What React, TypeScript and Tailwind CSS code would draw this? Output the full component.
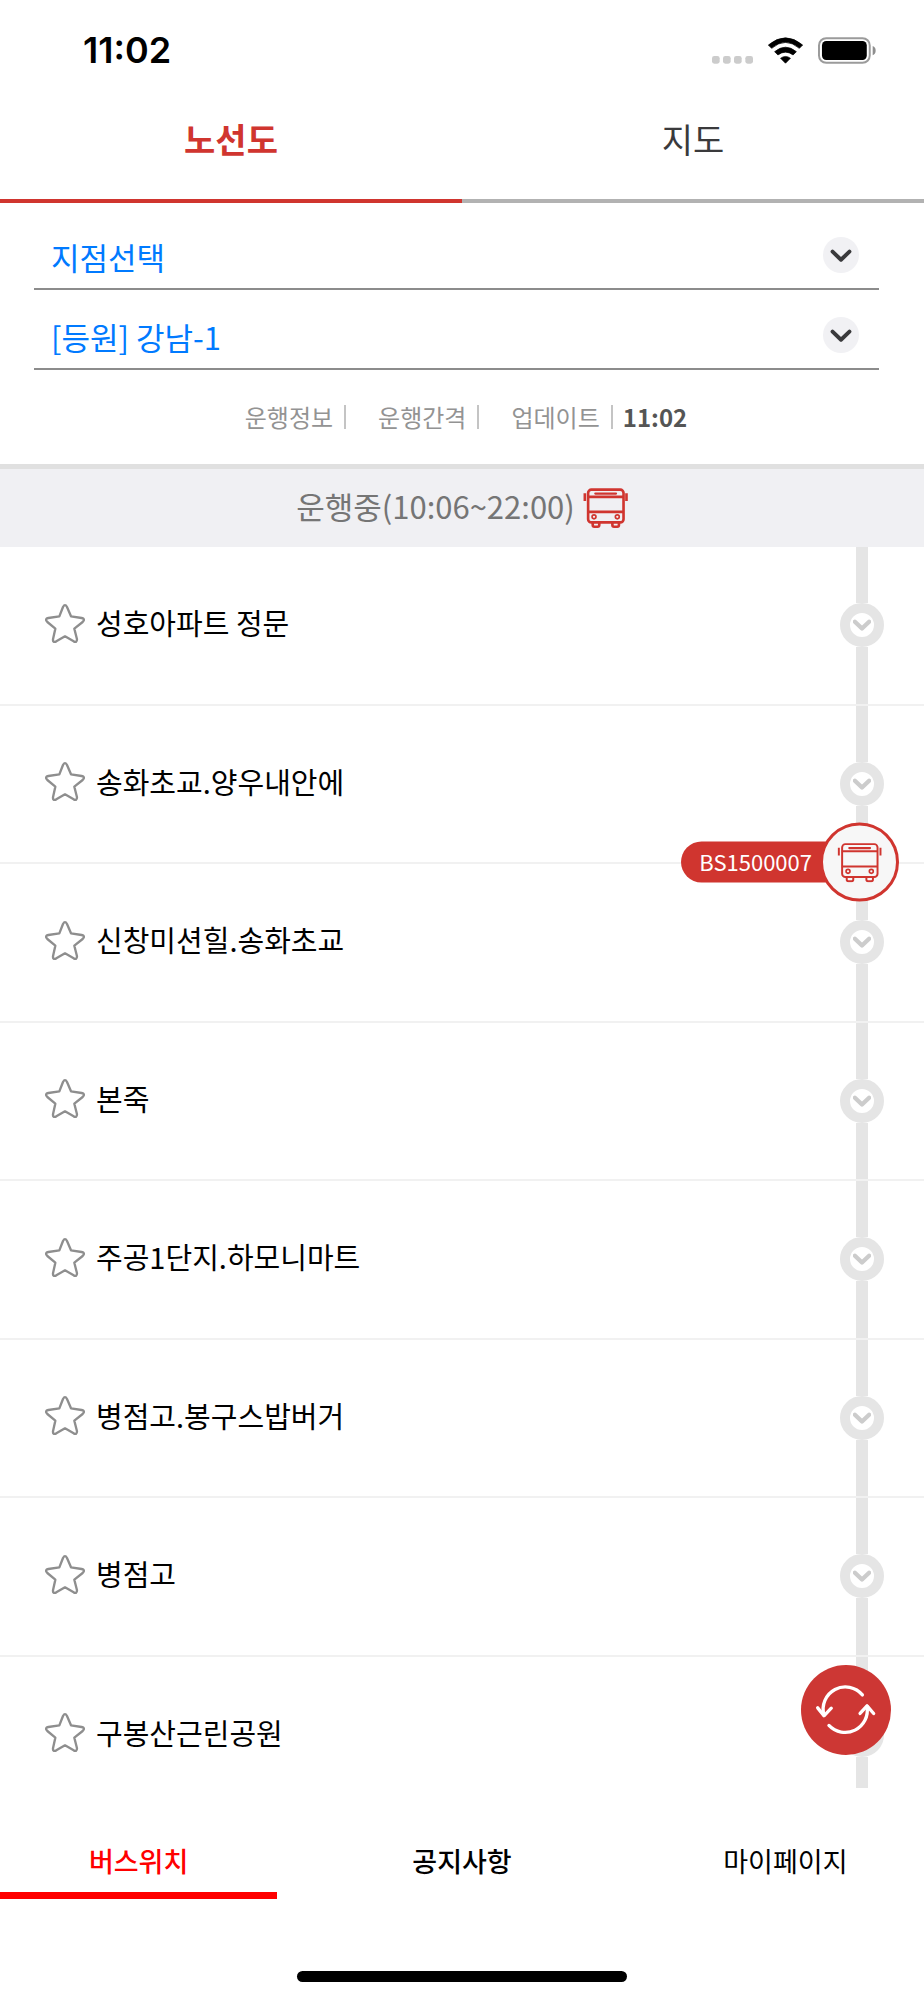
import React, { useState } from 'react'
import clsx from 'clsx'

const stops = [
  { id: 1, name: '성호아파트 정문' },
  { id: 2, name: '송화초교.양우내안에', bus: 'BS1500007' },
  { id: 3, name: '신창미션힐.송화초교' },
  { id: 4, name: '본죽' },
  { id: 5, name: '주공1단지.하모니마트' },
  { id: 6, name: '병점고.봉구스밥버거' },
  { id: 7, name: '병점고' },
  { id: 8, name: '구봉산근린공원' },
]

function StarIcon() {
  return (
    <svg viewBox="0 0 120 117" className="w-10 h-[39px]" fill="none" stroke="#8e8e8e" strokeWidth="7" strokeLinejoin="round">
      <path d="M54 9 Q60 -2 66 9 L78 37 L110 42 Q122 45 113 54 L88 74 L96 106 Q96 117 86 112 L60 97 L34 112 Q23 117 24 106 L31 74 L7 54 Q-2 45 10 42 L43 37 Z" />
    </svg>
  )
}

function BusIcon({ strokeWidth = 8 }: { strokeWidth?: number }) {
  return (
    <svg viewBox="0 0 136 122" className="w-[45px] h-10 shrink-0" fill="none" stroke="#d0352f" strokeWidth={strokeWidth}>
      <rect x="15" y="5" width="108" height="100" rx="10" />
      <path d="M37 17H100" strokeLinecap="round" strokeWidth="7" />
      <path d="M14 27H124M14 73H124" />
      <circle cx="33" cy="88" r="6" strokeWidth="5" />
      <circle cx="104" cy="88" r="6" strokeWidth="5" />
      <path d="M29 107V113Q29 118 34 118H44Q49 118 49 113V107M89 107V113Q89 118 94 118H104Q109 118 109 113V107" />
      <path d="M5 16V40M132 16V40" />
    </svg>
  )
}

function Chevron({ className, strokeWidth }: { className: string; strokeWidth: number }) {
  return (
    <svg viewBox="0 0 66 40" className={className} fill="none" stroke="currentColor" strokeWidth={strokeWidth} strokeLinecap="round" strokeLinejoin="round">
      <path d="M7 8 L33 33 L59 8" />
    </svg>
  )
}

function StatusBar() {
  return (
    <div className="flex items-center justify-between h-20 pt-5 pl-[83px] pr-12 shrink-0">
      <span className="font-['Inter',sans-serif] text-4xl leading-10 font-semibold text-black">11:02</span>
      <div className="flex items-center gap-[15px]">
        <svg viewBox="0 0 123 81" className="w-[41px] h-[27px]" fill="#cccccc">
          <rect x="0" y="57" width="23" height="23" rx="7" />
          <rect x="33" y="57" width="23" height="23" rx="7" />
          <rect x="66" y="57" width="23" height="23" rx="7" />
          <rect x="100" y="57" width="23" height="23" rx="7" />
        </svg>
        <svg viewBox="0 0 106 81" className="w-[35px] h-[27px]" fill="#000" stroke="#000" strokeWidth="2" strokeLinejoin="round">
          <path d="M1 24 Q53 -20 105 24 L95 34 Q53 -2 11 34 Z" />
          <path d="M20 44 Q53 17 86 44 L76 54 Q53 37 30 54 Z" />
          <path d="M38 64 Q53 53 68 64 L53 79 Z" />
        </svg>
        <svg viewBox="0 0 176 81" className="w-[58px] h-[27px]">
          <rect x="3" y="3" width="154" height="75" rx="22" fill="none" stroke="#9b9b9b" strokeWidth="6" />
          <rect x="12" y="12" width="136" height="57" rx="13" fill="#000" />
          <path d="M166 27 Q175 31 175 41 Q175 51 166 55 Z" fill="#8e8e8e" />
        </svg>
      </div>
    </div>
  )
}

function SelectRow({ label, options }: { label: string; options: string[] }) {
  return (
    <div className="relative h-20 border-b-2 border-[#8c8c8c]">
      <select aria-label={label} className="w-full h-full pt-4 pl-[17px] appearance-none bg-transparent text-[31px] leading-[46px] text-[#007aff]">
        {options.map((o) => (
          <option key={o}>{o}</option>
        ))}
      </select>
      <span className="absolute right-5 top-[27px] flex items-center justify-center w-9 h-9 rounded-full bg-[#f1f1f4] text-[#3a3a3c] pointer-events-none">
        <Chevron className="w-[22px] h-[13px]" strokeWidth={12} />
      </span>
    </div>
  )
}

export default function App() {
  const [tab, setTab] = useState('노선도')
  const [page, setPage] = useState('버스위치')
  const [favorites, setFavorites] = useState<number[]>([])

  function toggleFavorite(id: number) {
    setFavorites((prev) => (prev.includes(id) ? prev.filter((f) => f !== id) : [...prev, id]))
  }

  return (
    <div className="flex flex-col h-screen bg-white text-black font-['Noto_Sans_CJK_KR',sans-serif]">
      <StatusBar />

      <div className="grid grid-cols-2 h-[123px] shrink-0">
        {['노선도', '지도'].map((t) => (
          <button
            key={t}
            onClick={() => setTab(t)}
            className={clsx(
              'border-b-4 pb-0.5 text-[34px] leading-[48px]',
              tab === t ? 'border-[#d0352f] text-[#d0352f] font-bold' : 'border-[#b2b2b2] text-[#3a3a3c]'
            )}
          >
            {t}
          </button>
        ))}
      </div>

      <div className="pt-[7px] pl-[34px] pr-[45px] shrink-0">
        <SelectRow label="지점" options={['지점선택']} />
        <SelectRow label="노선" options={['[등원] 강남-1']} />
      </div>

      <div className="flex items-center justify-center h-[94px] pl-2 text-2xl leading-6 text-[#939393] shrink-0">
        <span className="pr-[11px] mr-8 border-r-2 border-[#c4c4c4]">운행정보</span>
        <span className="pr-[11px] mr-8 border-r-2 border-[#c4c4c4]">운행간격</span>
        <span className="pr-[11px] mr-2.5 border-r-2 border-[#c4c4c4]">업데이트</span>
        <strong className="font-bold text-[#555555]">11:02</strong>
      </div>

      <div className="flex items-center justify-center gap-2 h-[83px] border-t-5 border-[#e0e0e0] bg-[#f0f0f3] text-[31px] leading-[46px] text-[#757575] shrink-0">
        <span className="pb-1">운행중(10:06~22:00)</span>
        <BusIcon />
      </div>

      <div className="relative flex-1 min-h-0">
        <div className="h-full overflow-hidden">
          <ul className="grid auto-rows-fr h-[1268px]">
            {stops.map((s) => (
              <li key={s.id} className="relative flex items-center justify-between pl-[45px] pr-10 border-b-2 border-[#f1f1f1]">
                <div className="flex items-center gap-[11px] pb-1">
                  <button aria-label={`${s.name} 즐겨찾기`} aria-pressed={favorites.includes(s.id)} onClick={() => toggleFavorite(s.id)}>
                    <StarIcon />
                  </button>
                  <span className="pb-0.5 text-[29px] leading-[42px]">{s.name}</span>
                </div>
                <div className="flex flex-col items-center self-stretch">
                  <div className="flex-1 w-3 bg-[#e5e5e5]" />
                  <div className="flex items-center justify-center w-11 h-11 rounded-full border-10 border-[#e5e5e5] bg-white text-[#cccccc]">
                    <Chevron className="w-[18px] h-3 shrink-0" strokeWidth={16} />
                  </div>
                  <div className="flex-1 w-3 bg-[#e5e5e5]" />
                </div>
                {s.bus && (
                  <div className="absolute z-10 right-[25px] top-full -translate-y-1/2 flex items-center">
                    <span className="h-[41px] pl-[18px] pr-12 -mr-10 rounded-l-full bg-[#d0352f] text-[22px] leading-[38px] text-white">{s.bus}</span>
                    <span className="relative flex items-center justify-center w-[79px] h-[79px] shrink-0 rounded-full border-3 border-[#d0352f] bg-[#f7f7f7]">
                      <BusIcon strokeWidth={6} />
                    </span>
                  </div>
                )}
              </li>
            ))}
          </ul>
        </div>
        <button aria-label="새로고침" className="absolute z-10 right-[33px] bottom-[33px] flex items-center justify-center w-[90px] h-[90px] rounded-full bg-[#cd3734]">
          <svg viewBox="0 0 185 160" className="w-[62px] h-[53px]" fill="none" stroke="#fff" strokeWidth="10" strokeLinecap="round" strokeLinejoin="round">
            <path d="M142 33 A67 67 0 0 0 26 94" />
            <path d="M7 72 L26 96 L48 73" />
            <path d="M41 125 A67 67 0 0 0 156 68" />
            <path d="M135 89 L156 66 L176 89" />
          </svg>
        </button>
      </div>

      <nav className="flex mt-[42px] h-[69px] shrink-0">
        {['버스위치', '공지사항', '마이페이지'].map((p) => (
          <button
            key={p}
            onClick={() => setPage(p)}
            className={clsx(
              'border-b-7 text-[27px] leading-10',
              p === '공지사항' ? 'w-2/5' : 'w-3/10',
              p === '마이페이지' ? 'font-normal' : 'font-medium',
              page === p ? 'border-[#ff0000] text-[#ff0000]' : 'border-transparent'
            )}
          >
            {p}
          </button>
        ))}
      </nav>

      <div className="flex justify-center pt-[72px] pb-[18px] shrink-0">
        <div className="w-[330px] h-[11px] rounded-full bg-black" />
      </div>
    </div>
  )
}
